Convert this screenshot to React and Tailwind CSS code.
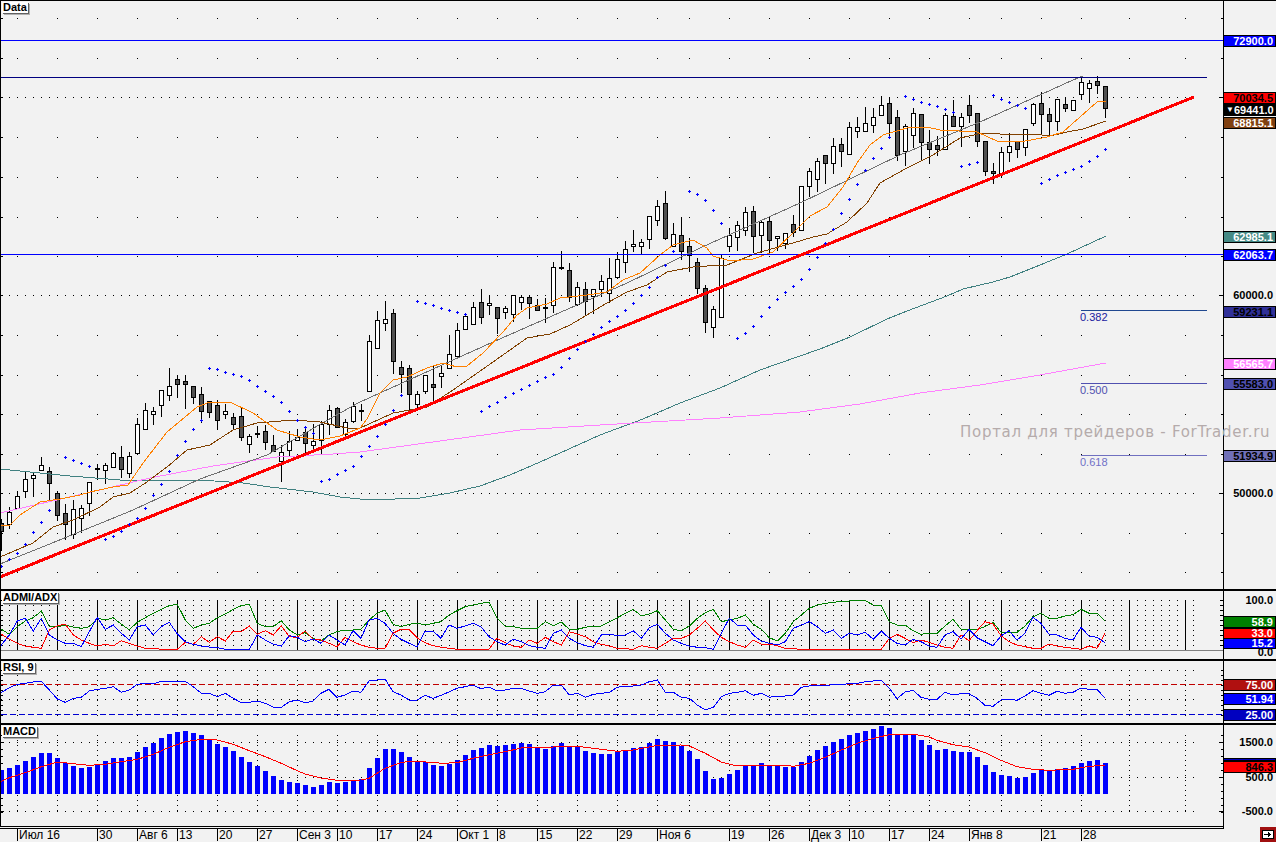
import React from 'react';

// pixel readings: "x,y" pairs measured on a 3x crop, ox/oy = crop origin
const at = (ox, oy, s) =>
  s.trim().split(/\s+/).map((p) => {
    const [x, y] = p.split(',');
    return `${(ox + x / 3).toFixed(1)},${(oy + y / 3).toFixed(1)}`;
  }).join(' ');

// top, bottom, high, low, dark
const CANDLES = [
  [523,531,519,550,1],[512,524,507,528,0],[496,508,491,508,0],[479,491,471,497,0],[475,478,472,496,0],[465,470,457,470,0],[471,483,467,500,1],[493,515,491,520,1],[513,524,504,539,1],[509,534,500,538,0],
  [508,518,505,532,0],[482,503,482,515,0],[468,469,464,479,1],[465,470,463,483,0],[453,467,452,467,0],[457,469,446,477,1],[456,473,452,477,0],[424,453,418,454,0],[410,429,403,429,0],[411,414,407,424,0],
  [390,405,390,416,0],[386,395,368,400,0],[379,384,375,397,1],[381,384,375,408,1],[386,397,386,403,1],[394,411,387,422,1],[401,412,401,417,1],[405,420,400,429,1],[411,414,404,418,0],[417,424,413,429,1],
  [416,437,407,440,1],[436,444,434,452,0],[433,434,426,437,1],[431,442,425,449,1],[445,451,435,451,1],[452,461,445,481,0],[441,450,431,455,0],[437,440,429,440,0],[432,443,427,453,1],[441,445,424,449,0],
  [424,440,421,453,0],[410,424,405,434,0],[408,427,407,427,1],[422,434,419,437,0],[406,421,402,422,0],[410,411,404,420,1],[341,391,335,391,0],[320,348,311,348,0],[319,323,301,330,0],[313,361,309,373,1],
  [367,374,361,392,1],[368,394,365,411,1],[394,404,391,407,0],[375,391,375,393,0],[384,387,365,400,1],[373,376,365,387,0],[354,368,335,368,0],[330,356,323,357,0],[316,329,313,329,0],[307,324,302,324,0],
  [302,317,289,323,1],[303,305,295,314,0],[307,318,307,333,1],[308,312,306,318,0],[295,314,295,321,0],[297,302,295,309,0],[297,303,295,318,1],[305,310,299,310,1],[307,308,298,322,1],[267,305,262,312,0],
  [267,268,251,269,1],[270,297,263,301,1],[287,304,282,305,0],[289,301,282,314,1],[289,296,289,313,0],[281,289,275,296,0],[278,293,258,302,0],[259,277,252,278,0],[249,262,241,272,0],[244,246,230,251,0],
  [242,246,239,254,0],[216,239,216,248,0],[206,220,200,225,0],[203,238,191,239,1],[234,246,223,246,0],[235,251,217,259,1],[246,255,238,271,1],[262,288,258,293,1],[288,322,285,332,1],[309,327,306,337,0],
  [258,317,255,317,0],[235,246,228,251,0],[225,237,221,250,0],[212,230,207,235,0],[211,236,206,252,1],[222,235,220,252,0],[221,240,218,252,1],[236,238,236,250,0],[233,243,233,248,0],[224,232,215,236,1],
  [186,230,186,230,0],[171,186,168,196,0],[161,179,158,191,0],[155,163,155,183,1],[146,163,138,173,0],[144,151,138,166,1],[127,154,122,154,0],[127,131,117,137,0],[123,131,107,131,0],[117,125,108,132,0],
  [105,115,96,115,0],[103,123,97,137,1],[117,155,110,160,1],[126,151,124,165,0],[113,135,108,147,0],[114,142,114,159,1],[142,149,130,163,1],[145,149,136,155,1],[115,149,113,149,0],[116,126,100,126,1],
  [117,126,113,146,0],[105,115,95,122,1],[113,141,113,146,1],[141,171,141,175,1],[171,173,163,183,1],[152,173,147,177,0],[146,152,133,161,0],[141,149,141,157,1],[129,147,129,155,0],[104,123,103,125,0],
  [103,114,92,133,1],[114,121,108,136,1],[99,121,99,130,0],[104,108,97,111,1],[100,110,100,110,0],[82,94,77,99,0],[83,88,80,102,0],[81,85,76,93,1],[86,108,86,117,1],
];

// index of first candle, then y for each following candle
const SAR = [
  [0,[566,559,553,544,532,522,510]],
  [8,[457,460,463,466]],
  [13,[539,536,531,524,518,508,495,484,471,455,441,429,420]],
  [26,[368,369,372,374,376,380,386,391,396,402,411,420,427,433]],
  [40,[481,479,474,470,466,456,446,436,424,410,395]],
  [52,[301,303,305,308,310,312,314]],
  [60,[411,406,402,397,393,389,385,381,377,374,367,358,349,341,334,327,321,316,310,303,295,287,277,265,251]],
  [86,[191,194,200,210,223]],
  [92,[338,333,326,316,307,299,292,286,279,269,257,243,229,213,199,184,170,158,148,137]],
  [113,[96,99,102,104,106,109,112]],
  [120,[166,164,162]],
  [124,[95,99,102,105,108]],
  [130,[183,179,175,172,169,166,161,156,149]],
];

const MA_TEAL = '0,469 70,476 120,480 200,480 243,483 270,487 313,492 340,497 370,500 420,498 450,493 480,486 510,475 540,462 600,435 643,419 680,403 720,388 760,370 820,349 850,337 887,319 907,311 947,296 963,289 993,282 1010,277 1040,265 1067,254 1106,236';
const MA_PINK = '0,513 87,493 150,478 213,466 277,457 333,454 360,452 440,441 520,430 600,425 720,418 800,412 860,404 920,393 980,385 1040,375 1106,363';
const MA_GRAY = '0,564 67,537 133,510 200,479 267,455 333,417 360,402 493,342 627,283 700,248 800,203 900,155 980,122 1073,80 1083,76';
const MA_BROWN = '0,557 33,543 53,527 73,520 100,507 113,497 130,493 147,482 167,467 187,450 210,445 233,430 257,423 293,420 320,422 347,428 360,428 380,419 393,413 427,407 453,390 493,362 527,338 550,334 570,325 607,303 627,292 647,285 667,272 693,267 707,266 727,265 757,253 793,243 813,237 827,234 847,222 867,203 880,183 907,168 933,155 960,138 983,133 1000,134 1033,134 1050,136 1067,132 1083,129 1106,121';
const MA_ORANGE = '0,525 10,525 20,515 40,502 60,499 80,495 90,492 113,487 128,485 143,463 167,432 197,407 210,402 230,402 253,413 277,430 300,437 320,440 340,436 360,428 367,419 380,393 393,380 407,377 427,368 443,363 457,367 467,366 483,353 503,332 517,315 527,308 547,304 560,298 587,295 607,292 623,280 640,273 660,255 673,245 693,240 707,248 713,256 730,261 753,259 773,252 793,233 810,216 827,207 843,187 857,163 870,145 883,135 907,128 927,127 940,130 977,132 997,141 1020,142 1047,137 1063,132 1080,117 1097,102 1106,101';

const ADX_GREEN = [
  at(0, 585, '0,130 28,148 52,125 76,108 100,98 124,78 148,125 172,125 196,120 220,126 244,130 268,125 292,100 316,105 340,98 364,118 388,134 412,112 436,98 460,85 484,73 508,62 532,58 556,105 580,130 604,120 628,115 652,98 676,87 700,73 724,62 748,58 772,115 796,125 820,125 844,107 868,135 892,150'),
  at(295, 590, '30,128 54,145 78,152 102,135 126,125 150,120 174,120 198,118 222,90 246,70 270,60 294,103 318,110 342,103 366,99 390,105 414,100 438,95 462,75 486,62 510,50 534,45 558,40 582,36 606,85 630,108'),
  at(500, 590, '40,110 64,115 88,115 112,115 136,95 160,107 184,96 208,118 232,118 256,112 280,108 304,108 328,95 352,83 376,70 400,58 424,78 448,72 472,62 496,90 520,118 544,122 568,108 592,85 616,68 640,58 664,95 688,90 712,85 736,75 760,103 784,118 808,143 832,153 856,130 880,95 904,75 928,55 952,45 976,40 1000,37 1024,34 1048,33 1072,32 1096,32 1120,45 1144,46 1168,95'),
  at(890, 590, '21,105 45,105 69,122 93,133 117,130 141,130 165,108 189,88 213,118 237,118 261,118 285,110 309,97 333,127 357,127 381,127 405,108 429,80 453,70 477,85 501,85 525,78 549,74 573,58 597,70 621,70 645,92'),
].join(' ');
const ADX_BLUE = [
  at(0, 585, '0,185 28,150 52,108 76,100 100,138 124,100 148,150 172,165 196,175 220,175 244,185 268,140 292,97 316,133 340,120 364,145 388,165 412,125 436,120 460,150 484,125 508,112 532,147 556,170 580,178 604,183 628,186 652,188 676,193 700,193 724,193 748,193 772,150 796,165 820,178 844,183 868,152 892,157'),
  at(295, 590, '30,155 54,147 78,160 102,135 126,150 150,165 174,122 198,145 222,90 246,85 270,100 294,130 318,148 342,160 366,170 390,123 414,123 438,145 462,105 486,115 510,108 534,100 558,110 582,140 606,155 630,165'),
  at(500, 590, '40,147 64,155 88,167 112,172 136,175 160,130 184,120 208,145 232,158 256,167 280,172 304,135 328,132 352,137 376,135 400,122 424,145 448,113 472,103 496,130 520,150 544,160 568,168 592,172 616,173 640,178 664,130 688,85 712,105 736,105 760,135 784,153 808,160 832,165 856,155 880,115 904,105 928,95 952,110 976,130 1000,120 1024,145 1048,130 1072,135 1096,127 1120,148 1144,123 1168,145'),
  at(890, 590, '21,160 45,165 69,148 93,155 117,168 141,172 165,135 189,125 213,147 237,118 261,143 285,155 309,167 333,138 357,122 381,150 405,130 429,82 453,100 477,133 501,135 525,145 549,150 573,112 597,138 621,142 645,158'),
].join(' ');
const ADX_RED = [
  at(0, 585, '0,145 28,163 52,175 76,183 100,187 124,190 148,135 172,122 196,118 220,150 244,165 268,175 292,183 316,178 340,183 364,167 388,175 412,183 436,190 460,190 484,193 508,193 532,193 556,172 580,178 604,155 628,172 652,155 676,168 700,138 724,140 748,123 772,148 796,137 820,150 844,122 868,155 892,157'),
  at(295, 590, '30,123 54,147 78,150 102,160 126,170 150,142 174,155 198,165 222,172 246,175 270,175 294,130 318,118 342,118 366,143 390,158 414,167 438,172 462,175 486,178 510,178 534,178 558,178 582,178 606,145 630,158'),
  at(500, 590, '40,168 64,172 88,150 112,160 136,142 160,155 184,165 208,125 232,132 256,140 280,155 304,163 328,168 352,175 376,176 400,178 424,167 448,172 472,175 496,160 520,145 544,145 568,135 592,115 616,93 640,120 664,142 688,155 712,165 736,172 760,150 784,162 808,162 832,167 856,175 880,176 904,178 1144,178 1168,145'),
  at(890, 590, '21,133 45,145 69,158 93,150 117,157 141,165 165,172 189,175 213,135 237,152 261,122 285,95 309,102 333,137 357,155 381,165 405,170 429,175 453,175 477,162 501,168 525,172 549,175 573,178 597,168 621,175 645,130'),
].join(' ');
const RSI_LINE = [
  at(0, 585, '0,325 28,308 52,298 76,295 100,291 124,289 148,315 172,342 196,352 220,340 244,337 268,318 292,313 316,310 340,305 364,322 388,315 412,298 436,295 460,297 484,289 508,289 532,289 556,289 580,305 604,325 628,325 652,335 676,325 700,340 724,353 748,352 772,348 796,355 820,367 844,367 868,350 892,345'),
  at(295, 590, '30,338 54,334 78,310 102,298 126,322 150,315 174,303 198,307 222,273 246,270 270,267 294,305 318,315 342,330 366,330 390,316 414,325 438,316 462,306 486,295 510,290 534,285 558,296 582,291 606,303 630,300'),
  at(500, 590, '40,295 64,295 88,303 112,310 136,305 160,285 184,285 208,315 232,310 256,322 280,313 304,310 328,307 352,292 376,288 400,288 424,285 448,275 472,270 496,307 520,307 544,322 568,325 592,345 616,360 640,352 664,320 688,310 712,307 736,302 760,316 784,310 808,322 832,318 856,318 880,315 904,292 928,288 952,287 976,288 1000,283 1024,285 1048,280 1072,280 1096,275 1120,273 1144,271 1168,295'),
  at(890, 590, '21,326 45,306 69,301 93,322 117,328 141,328 165,307 189,315 213,311 237,311 261,325 285,346 309,349 333,330 357,328 381,331 405,318 429,302 453,310 477,316 501,304 525,310 549,307 573,294 597,298 621,298 645,325'),
].join(' ');
const MACD_SIGNAL = [
  at(0, 585, '0,590 28,578 76,563 124,545 172,531 220,536 268,541 316,538 364,530 412,523 460,508 508,487 556,470 604,463 652,465 700,478 748,497 796,515 844,535 892,557'),
  at(295, 590, '30,552 78,564 126,571 198,570 222,565 270,535 318,518 342,514 414,517 438,520 486,518 534,505 582,494 630,485'),
  at(500, 590, '64,474 136,473 184,469 232,469 304,478 352,484 400,480 472,466 544,465 568,468 616,490 664,516 712,528 736,526 856,526 880,529 928,520 976,502 1024,480 1072,460 1120,445 1168,434'),
  at(890, 590, '80,434 117,441 141,451 189,464 237,471 285,488 333,511 381,530 429,538 477,541 549,538 597,529 645,526'),
].join(' ');
const MACD_BARS = [24,26,29,33,37,41,41,36,31,28,26,27,30,33,36,36,37,42,47,51,56,60,62,63,61,59,55,50,47,43,37,32,28,23,18,14,12,11,9,7,9,12,11,12,13,15,26,36,45,45,42,37,33,32,29,28,30,34,39,44,46,49,48,49,50,51,50,47,45,48,51,47,48,43,41,40,40,43,44,46,47,51,55,53,52,48,43,35,23,15,16,20,24,28,28,31,29,29,27,27,32,38,44,48,52,55,59,61,63,65,68,66,60,60,60,54,49,44,45,43,42,42,37,29,22,19,18,16,17,21,24,24,25,26,28,31,33,34,31];

const WEEKS = [];
for (let x = 17; x <= 657; x += 40) WEEKS.push(x);
WEEKS.push(689, 729, 769, 809, 849, 889, 929, 969, 1001, 1041, 1081, 1129, 1185);

const DENSE = [];
for (let x = 1; x <= 1193; x += 8) DENSE.push(x);

const dot = (x, y) => `M${x} ${y}h1v1h-1z`;
const hTick = (x, y, w) => `M${x} ${y}h${w}v1h-${w}z`;

const mainGrid = () => {
  let d = '';
  [18, 58, 97, 137, 177, 217, 256, 295, 335, 375, 414, 454, 493, 533, 572].forEach((y) => {
    const dense = y === 97 || y === 295 || y === 493;
    (dense ? DENSE : WEEKS).forEach((x) => { d += dot(x, y); });
    d += hTick(1, y, 2) + hTick(dense ? 1219 : 1221, y, dense ? 4 : 2);
  });
  return d;
};

const adxGrid = () => {
  let d = '';
  for (let y = 600; y < 650; y += 5) {
    DENSE.forEach((x) => { d += dot(x, y); });
    d += hTick(1, y, 2) + hTick(1220, y, 3);
  }
  return d;
};

const rsiGrid = () => {
  let d = '';
  [670, 699].forEach((y) => DENSE.forEach((x) => { d += dot(x, y); }));
  WEEKS.forEach((x) => { for (let y = 670; y < 716; y += 5) d += dot(x, y); });
  for (let y = 670; y < 716; y += 5) d += hTick(1, y, 2) + hTick(1221, y, 2);
  return d;
};

const macdGrid = () => {
  let d = '';
  [742, 777, 811].forEach((y) => {
    DENSE.forEach((x) => { d += dot(x, y); });
    d += hTick(1, y, 3) + hTick(1219, y, 4);
  });
  WEEKS.forEach((x) => { for (let y = 735; y < 815; y += 5) d += dot(x, y); });
  for (let y = 735; y < 816; y += 7) d += hTick(1, y, 2) + hTick(1221, y, 2);
  return d;
};

const weekBars = () => WEEKS.map((x) => `M${x} 600h1v50h-1z`).join('');

const MainChart = () => (
  <svg className="block w-[1222px] h-[588px]" viewBox="1 1 1222 588" shapeRendering="crispEdges">
    <path d={mainGrid()} fill="#000" />
    {CANDLES.map(([t, b, h, l, dark], i) => {
      const x = 1 + 8 * i;
      return (
        <g key={i}>
          <rect x={x} y={h} width="1" height={l - h + 1} fill="#000" />
          <rect x={x - 1.5} y={t + 0.5} width="4" height={Math.max(b - t, 1)} fill={dark ? '#505050' : '#fff'} stroke="#000" />
        </g>
      );
    })}
    <polyline points={MA_TEAL} fill="none" stroke="#408080" />
    <polyline points={MA_PINK} fill="none" stroke="#ff80ff" />
    <polyline points={MA_GRAY} fill="none" stroke="#707070" />
    <polyline points={MA_BROWN} fill="none" stroke="#804000" />
    <polyline points={MA_ORANGE} fill="none" stroke="#ff8000" />
    <rect x="0" y="40" width="1223" height="1" fill="#0000ff" />
    <rect x="0" y="254" width="1223" height="1" fill="#0000ff" />
    <rect x="0" y="77" width="1207" height="1" fill="#000080" />
    <rect x="1081" y="310" width="126" height="1" fill="#204890" />
    <rect x="1081" y="383" width="126" height="1" fill="#5050b0" />
    <rect x="1081" y="455" width="126" height="1" fill="#7070c0" />
    <line x1="0" y1="577" x2="1194" y2="97" stroke="#ff0000" strokeWidth="3" />
    {SAR.map(([start, ys]) =>
      ys.map((y, k) => {
        const x = 1 + 8 * (start + k);
        return <path key={x} d={`M${x} ${y - 1}h1v1h1v1h-1v1h-1v-1h-1v-1h1z`} fill="#0000ff" />;
      })
    )}
    <g className="font-['Liberation_Sans',sans-serif] text-[11px]" shapeRendering="auto">
      <text x="1080" y="321" fill="#2020a0">0.382</text>
      <text x="1080" y="394" fill="#5050b0">0.500</text>
      <text x="1080" y="466" fill="#7070c8">0.618</text>
    </g>
  </svg>
);

const AdxChart = () => (
  <svg className="block w-[1222px] h-[68px]" viewBox="1 591 1222 68" shapeRendering="crispEdges">
    <path d={adxGrid()} fill="#000" />
    <path d={weekBars()} fill="#000" />
    <rect x="1" y="650" width="1222" height="1" fill="#808080" />
    <polyline points={ADX_GREEN} fill="none" stroke="#008000" />
    <polyline points={ADX_RED} fill="none" stroke="#ff0000" />
    <polyline points={ADX_BLUE} fill="none" stroke="#0000ff" />
  </svg>
);

const RsiChart = () => (
  <svg className="block w-[1222px] h-[62px]" viewBox="1 661 1222 62" shapeRendering="crispEdges">
    <path d={rsiGrid()} fill="#000" />
    <line x1="1" y1="684.5" x2="1223" y2="684.5" stroke="#c00000" strokeDasharray="6 3" />
    <line x1="1" y1="714.5" x2="1223" y2="714.5" stroke="#0000d0" strokeDasharray="6 3" />
    <polyline points={RSI_LINE} fill="none" stroke="#0000ff" />
  </svg>
);

const MacdChart = () => (
  <svg className="block w-[1222px] h-[101px]" viewBox="1 725 1222 101" shapeRendering="crispEdges">
    <path d={macdGrid()} fill="#000" />
    {MACD_BARS.map((h, i) => (
      <rect key={i} x={1 + 8 * i - 2} y={794 - h} width="5" height={h} fill="#0000ff" />
    ))}
    <polyline points={MACD_SIGNAL} fill="none" stroke="#ff0000" />
  </svg>
);

const NameTag = ({ children }) => (
  <div className="absolute left-[1px] top-[1px] h-[11px] px-[1px] bg-white text-black font-bold text-[11px] leading-[11px] whitespace-nowrap shadow-[1px_1px_0_#606060,2px_2px_0_#b0b0b0]">
    {children}
  </div>
);

// Right-hand scale: labels hang at the row of their value, y is the page row
const Scale = ({ top, items }) => (
  <div className="relative flex-1 border-l border-black">
    {items.map(({ y, h = 12, bg, fg, mark, label }) =>
      bg ? (
        <div
          key={y}
          className={`absolute left-0 w-[52px] flex items-center justify-between px-[2px] border-y border-r border-black font-bold text-[11px] leading-none ${bg} ${fg}`}
          style={{ top: y - top, height: h }}
        >
          <span className="text-[8px]">{mark}</span>
          <span>{label}</span>
        </div>
      ) : (
        <div
          key={y}
          className="absolute right-[3px] font-bold text-[11px] leading-none text-black"
          style={{ top: y - top - 5 }}
        >
          {label}
        </div>
      )
    )}
  </div>
);

const MAIN_SCALE = [
  { y: 35, bg: 'bg-[#0000ff]', fg: 'text-white', label: '72900.0' },
  { y: 92, bg: 'bg-[#ff0000]', fg: 'text-black', label: '70034.5' },
  { y: 104, bg: 'bg-black', fg: 'text-white', mark: '▼', label: '69441.0' },
  { y: 117, bg: 'bg-[#804010]', fg: 'text-white', label: '68815.1' },
  { y: 231, bg: 'bg-[#458a85]', fg: 'text-white', label: '62985.1' },
  { y: 249, bg: 'bg-[#0000ff]', fg: 'text-white', label: '62063.7' },
  { y: 295, label: '60000.0' },
  { y: 306, bg: 'bg-[#303098]', fg: 'text-black', label: '59231.1' },
  { y: 358, bg: 'bg-[#ff80ff]', fg: 'text-white', label: '56565.7' },
  { y: 378, bg: 'bg-[#5050b0]', fg: 'text-black', label: '55583.0' },
  { y: 450, bg: 'bg-[#7070b8]', fg: 'text-black', label: '51934.9' },
  { y: 493, label: '50000.0' },
];

const ADX_SCALE = [
  { y: 600, label: '100.0' },
  { y: 652, label: '0.0' },
  { y: 616, bg: 'bg-[#008000]', fg: 'text-white', label: '58.9' },
  { y: 628, h: 11, bg: 'bg-[#ff0000]', fg: 'text-white', label: '33.0' },
  { y: 638, h: 11, bg: 'bg-[#0000ff]', fg: 'text-white', label: '15.2' },
];

const RSI_SCALE = [
  { y: 679, bg: 'bg-[#b01010]', fg: 'text-white', label: '75.00' },
  { y: 693, bg: 'bg-[#0000ff]', fg: 'text-white', label: '51.94' },
  { y: 709, bg: 'bg-[#0000c0]', fg: 'text-white', label: '25.00' },
];

const MACD_SCALE = [
  { y: 742, label: '1500.0' },
  { y: 758, h: 3, bg: 'bg-[#0000c0]', fg: 'text-white' },
  { y: 761, bg: 'bg-[#ff0000]', fg: 'text-black', label: '846.3' },
  { y: 777, label: '500.0' },
  { y: 811, label: '-500.0' },
];

const DATES = [
  [17, 'Июл 16'], [97, '30'], [137, 'Авг 6'], [177, '13'], [217, '20'], [257, '27'], [297, 'Сен 3'], [337, '10'], [377, '17'], [417, '24'],
  [457, 'Окт 1'], [497, '8'], [537, '15'], [577, '22'], [617, '29'], [657, 'Ноя 6'], [729, '19'], [769, '26'], [809, 'Дек 3'], [849, '10'],
  [889, '17'], [929, '24'], [969, 'Янв 8'], [1041, '21'], [1081, '28'],
];

const App = () => (
  <div className="relative w-[1276px] h-[842px] overflow-hidden bg-[#f2f2f2] font-['Liberation_Sans',sans-serif] border-t border-black">
    {/* price pane */}
    <div className="flex h-[588px]">
      <div className="relative w-[1223px] border-l border-black">
        <MainChart />
        <NameTag>Data</NameTag>
      </div>
      <Scale top={1} items={MAIN_SCALE} />
    </div>

    {/* ADX pane */}
    <div className="flex h-[70px] border-t-2 border-black">
      <div className="relative w-[1223px] border-l border-black">
        <AdxChart />
        <NameTag>ADMI/ADX</NameTag>
      </div>
      <Scale top={591} items={ADX_SCALE} />
    </div>

    {/* RSI pane */}
    <div className="flex h-[64px] border-t-2 border-black">
      <div className="relative w-[1223px] border-l border-black">
        <RsiChart />
        <NameTag>RSI, 9</NameTag>
      </div>
      <Scale top={661} items={RSI_SCALE} />
    </div>

    {/* MACD pane */}
    <div className="flex h-[105px] border-t-2 border-black">
      <div className="relative w-[1223px] h-[102px] border-l border-b border-black">
        <MacdChart />
        <NameTag>MACD</NameTag>
      </div>
      <Scale top={725} items={MACD_SCALE} />
    </div>

    {/* date axis */}
    <div className="flex w-[1224px] h-[13px] border-t border-black text-[12px] leading-[13px] text-black">
      <div className="w-[17px]" />
      {DATES.map(([x, label], i) => {
        const next = i + 1 < DATES.length ? DATES[i + 1][0] : 1224;
        return (
          <div key={x} className="border-l border-black pl-[1px] whitespace-nowrap" style={{ width: next - x }}>
            {label}
          </div>
        );
      })}
    </div>

    {/* watermark and the scroll button sit over the panes */}
    <div className="absolute left-[960px] top-[421px] font-['DejaVu_Sans',sans-serif] text-[15px] leading-[20px] tracking-[0.72px] text-[#b5abab] whitespace-nowrap">
      Портал для трейдеров - ForTrader.ru
    </div>
    <div className="absolute right-0 bottom-0 w-[16px] h-[15px] bg-[#a01010] flex items-center justify-center">
      <svg width="12" height="9" viewBox="0 0 12 9" shapeRendering="crispEdges">
        <rect x="0.5" y="0.5" width="11" height="8" fill="#fff" stroke="#000" />
        <path d="M2 4h6v1h-6z M6 2h1v1h1v1h1v1h-1v1h-1v1h-1z" fill="#000" />
      </svg>
    </div>
  </div>
);

export default App;
